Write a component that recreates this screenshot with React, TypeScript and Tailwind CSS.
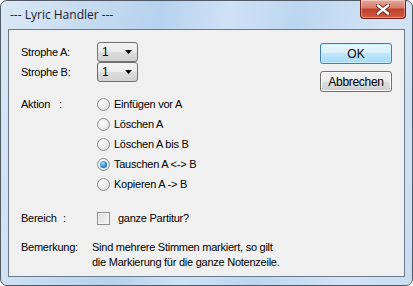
import React, { useState } from 'react';

const ui = { fontFamily: '"Liberation Sans", Arial, sans-serif' };
const title = { fontFamily: '"Open Sans", "Noto Sans", sans-serif' };

function Combo({ value }: { value: string }) {
  return (
    <div className="w-[41px] h-[20px] rounded-[3px] border border-[#707070] bg-[linear-gradient(#f3f3f3,#ebebeb_50%,#dcdcdc_50%,#d2d2d2)] flex items-center justify-between pl-[4px] pr-[5px] text-[12px] text-black">
      <span>{value}</span>
      <svg width="7" height="4" viewBox="0 0 7 4"><path d="M0 0h7L3.5 4z" fill="#000" /></svg>
    </div>
  );
}

function Radio({ label, checked, onClick }: { label: string; checked: boolean; onClick: () => void }) {
  return (
    <div className="h-[20px] flex items-center cursor-default" onClick={onClick}>
      <span className="w-[13px] h-[13px] rounded-full border border-[#8e8f8f] bg-[radial-gradient(circle_at_40%_40%,#ffffff,#e6e6e6_60%,#c9c9c9)] flex items-center justify-center">
        {checked && <span className="w-[7px] h-[7px] rounded-full bg-[radial-gradient(circle_at_40%_35%,#9ee0ff,#2d8bd3_55%,#0b4f8f)]" />}
      </span>
      <span className="ml-[4px]">{label}</span>
    </div>
  );
}

export default function App() {
  const [aktion, setAktion] = useState(3);
  const aktionen = ['Einfügen vor A', 'Löschen A', 'Löschen A bis B', 'Tauschen A <-> B', 'Kopieren A -> B'];

  return (
    <div className="w-[413px] h-[286px] bg-white">
      <div className="w-[413px] h-[286px] rounded-[7px] border border-[#505a66] bg-[linear-gradient(100deg,#dbe8f5_0%,#c5dbf1_20%,#b7d2ee_35%,#cfe2f5_50%,#bcd6f0_65%,#d3e4f5_85%,#c9ddf2_100%)] flex flex-col px-[7px] pb-[8px]">
        {/* Title bar */}
        <div className="h-[28px] flex items-start justify-between">
          <span style={title} className="mt-[5px] ml-[2px] text-[12px] text-[#1b1b2e]">--- Lyric Handler ---</span>
          <div className="w-[46px] h-[19px] -mt-px -mr-px rounded-b-[4px] border border-[#6b2018] border-t-0 bg-[linear-gradient(#e7a99c,#d87a68_45%,#c0402b_50%,#cf5a43_100%)] flex items-center justify-center shadow-[inset_0_0_0_1px_rgba(255,255,255,0.35)]">
            <svg width="14" height="11" viewBox="0 0 14 11">
              <path d="M2 1.5l10 8M12 1.5l-10 8" stroke="#5a1a10" strokeWidth="4" strokeLinecap="square" />
              <path d="M2 1.5l10 8M12 1.5l-10 8" stroke="#ffffff" strokeWidth="2.4" strokeLinecap="square" />
            </svg>
          </div>
        </div>

        {/* Client area */}
        <div style={ui} className="flex-1 border border-[#6d7a88] bg-[#f0f0f0] flex text-[11px] tracking-[-0.25px] text-black">
          <div className="flex-1 pl-[12px] pt-[12px] flex flex-col">
            <div className="h-[20px] flex items-center">
              <span className="w-[76px]">Strophe A:</span>
              <Combo value="1" />
            </div>
            <div className="h-[20px] flex items-center">
              <span className="w-[76px]">Strophe B:</span>
              <Combo value="1" />
            </div>

            <div className="mt-[12px] flex">
              <div className="w-[76px] h-[20px] flex items-center">
                <span className="w-[38px]">Aktion</span>:
              </div>
              <div className="flex flex-col">
                {aktionen.map((a, i) => (
                  <Radio key={a} label={a} checked={aktion === i} onClick={() => setAktion(i)} />
                ))}
              </div>
            </div>

            <div className="mt-[14px] h-[20px] flex items-center">
              <div className="w-[76px]">
                <span className="inline-block w-[42px]">Bereich</span>:
              </div>
              <span className="w-[13px] h-[13px] border border-[#8e8f8f] bg-[linear-gradient(135deg,#dcdcdc,#f6f6f6)] shadow-[inset_0_0_0_1px_#f4f4f4]" />
              <span className="ml-[8px]">ganze Partitur?</span>
            </div>

            <div className="mt-[12px] flex leading-[15px]">
              <span className="w-[71px]">Bemerkung:</span>
              <div>
                <div>Sind mehrere Stimmen markiert, so gilt</div>
                <div>die Markierung für die ganze Notenzeile.</div>
              </div>
            </div>
          </div>

          <div className="pt-[13px] pr-[12px] flex flex-col gap-[7px]">
            <button className="w-[72px] h-[21px] rounded-[3px] border border-[#3c7fb1] bg-[linear-gradient(#eaf6fd,#d9f0fc_50%,#bee6fd_50%,#a7d9f5)] shadow-[inset_0_0_0_1px_#c9eefe] text-[12px] tracking-normal">OK</button>
            <button className="w-[72px] h-[21px] rounded-[3px] border border-[#707070] bg-[linear-gradient(#f2f2f2,#ebebeb_50%,#dddddd_50%,#cfcfcf)] shadow-[inset_0_0_0_1px_#fcfcfc] text-[12px] tracking-[-0.3px]">Abbrechen</button>
          </div>
        </div>
      </div>
    </div>
  );
}
